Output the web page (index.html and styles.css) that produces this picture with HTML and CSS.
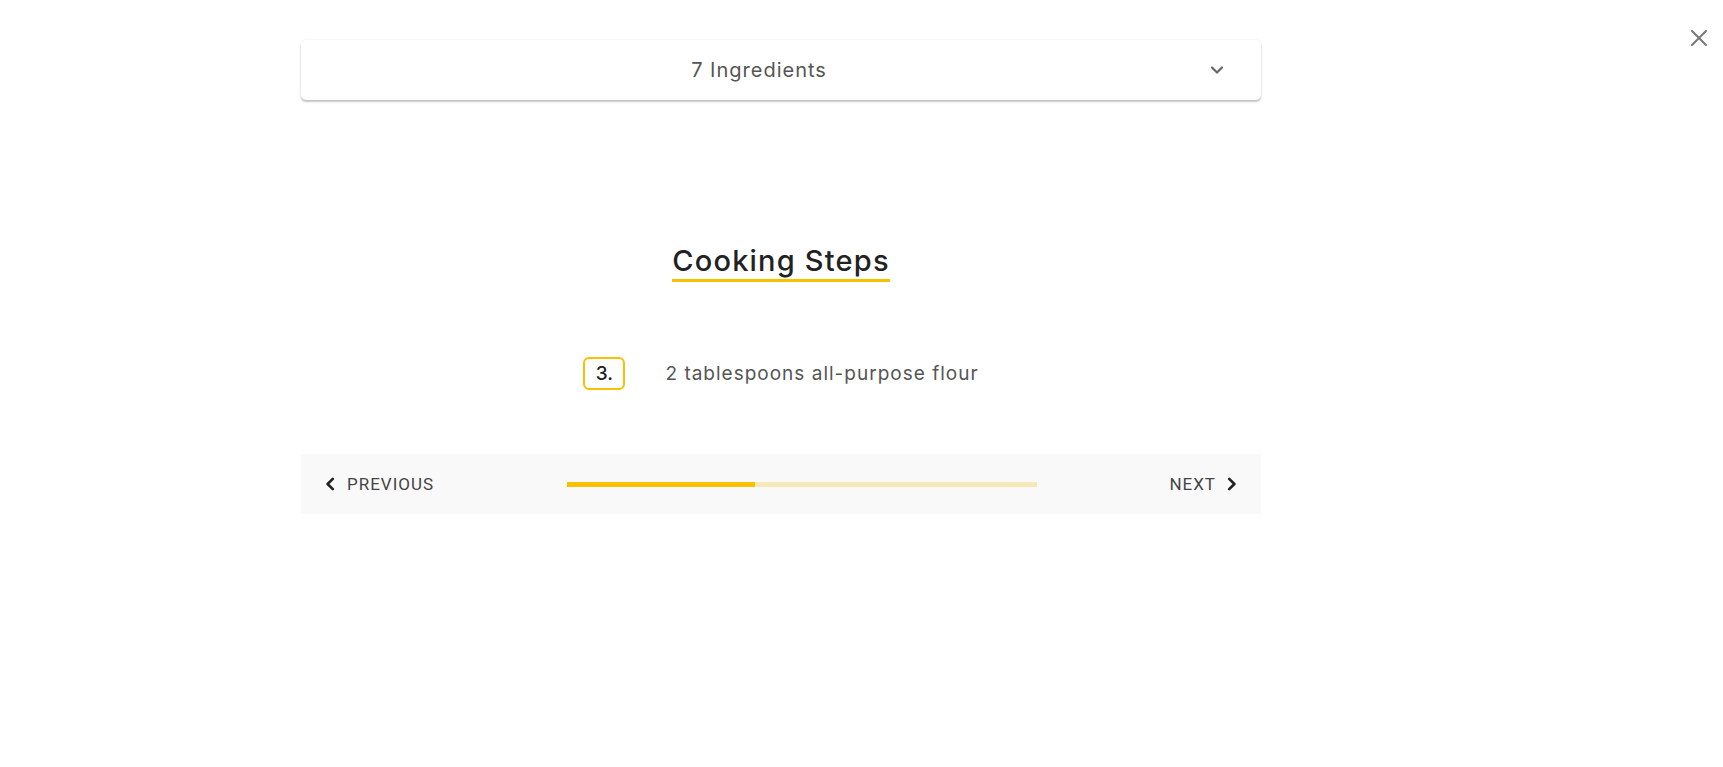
FILE: index.html
```html
<!DOCTYPE html>
<html>
<head>
<meta charset="utf-8">
<link rel="stylesheet" href="styles.css">
</head>
<body>
<div class="page">
  <button class="close" aria-label="Close">
    <svg width="18" height="18" viewBox="0 0 18 18"><path d="M2 2L16 16M16 2L2 16" stroke="#7a7a7a" stroke-width="2.1" stroke-linecap="round"/></svg>
  </button>
  <div class="content">
    <div class="ingredients">
      <span class="ing-label">7 Ingredients</span>
      <svg class="ing-chev" width="14" height="10" viewBox="0 0 14 10"><path d="M2 2.5L7 7.5L12 2.5" fill="none" stroke="#666" stroke-width="2.2" stroke-linecap="round" stroke-linejoin="round"/></svg>
    </div>
    <div class="title-wrap">
      <h2 class="title">Cooking Steps</h2>
    </div>
    <div class="step">
      <span class="step-num">3.</span>
      <span class="step-text">2 tablespoons all-purpose flour</span>
    </div>
    <div class="nav">
      <button class="nav-btn prev">
        <svg width="10" height="14" viewBox="0 0 10 14"><path d="M7.8 1.8L2.6 7L7.8 12.2" fill="none" stroke="#222" stroke-width="2.6" stroke-linecap="round" stroke-linejoin="round"/></svg>
        <span>PREVIOUS</span>
      </button>
      <div class="progress"><div class="progress-fill" style="width:40%"></div></div>
      <button class="nav-btn next">
        <span>NEXT</span>
        <svg width="10" height="14" viewBox="0 0 10 14"><path d="M2.2 1.8L7.4 7L2.2 12.2" fill="none" stroke="#222" stroke-width="2.6" stroke-linecap="round" stroke-linejoin="round"/></svg>
      </button>
    </div>
  </div>
</div>
</body>
</html>
```
FILE: styles.css
```css
* { box-sizing: border-box; }
html, body { margin: 0; padding: 0; background: #fff; }
body { font-family: "Inter", "Noto Sans", sans-serif; color: #333; }
.page { position: relative; width: 1723px; height: 767px; }
.close {
  position: absolute; top: 29px; right: 15px;
  width: 18px; height: 18px; padding: 0; border: 0; background: none;
  display: flex;
}
.content {
  margin-left: 301px; width: 960px; padding-top: 40px;
  display: flex; flex-direction: column;
}
.ingredients {
  height: 60px; border-radius: 5px; background: #fff;
  box-shadow: 0 0 3px rgba(0,0,0,0.08), 0 2px 2px rgba(0,0,0,0.22);
  display: flex; align-items: center; justify-content: center;
  padding-right: 44px;
  position: relative;
}
.ing-label { font-size: 20px; color: #555; letter-spacing: 1px; }
.ing-chev { position: absolute; right: 37px; top: 25px; }
.title-wrap { display: flex; justify-content: center; padding-top: 143px; }
.title {
  margin: 0; font-size: 29px; font-weight: 500; color: #222;
  line-height: 36px; padding-bottom: 0;
  border-bottom: 3px solid #f7c100;
  letter-spacing: 1.2px;
}
.step {
  display: flex; justify-content: center; align-items: center;
  gap: 40px; margin-top: 75px;
}
.step-num {
  width: 42px; height: 33px; border: 2px solid #f7c100; border-radius: 6px;
  display: flex; align-items: center; justify-content: center;
  font-size: 19px; color: #222; font-weight: 500;
}
.step-text { font-size: 19px; color: #555; letter-spacing: 1px; }
.nav {
  margin-top: 64px; height: 60px; background: #f9f9f9;
  display: flex; align-items: center; padding: 0 24px 0 24px;
}
.nav-btn {
  border: 0; background: none; padding: 0;
  display: flex; align-items: center; gap: 12px;
  font-family: "Roboto", "Liberation Sans", sans-serif; font-size: 17px;
  color: #444; letter-spacing: 1px;
}
.next { gap: 11px; margin-left: auto; }
.prev { width: 242px; }
.progress { width: 470px; height: 5px; background: #f7e8b8; }
.progress-fill { height: 100%; background: #f7c100; }
```
